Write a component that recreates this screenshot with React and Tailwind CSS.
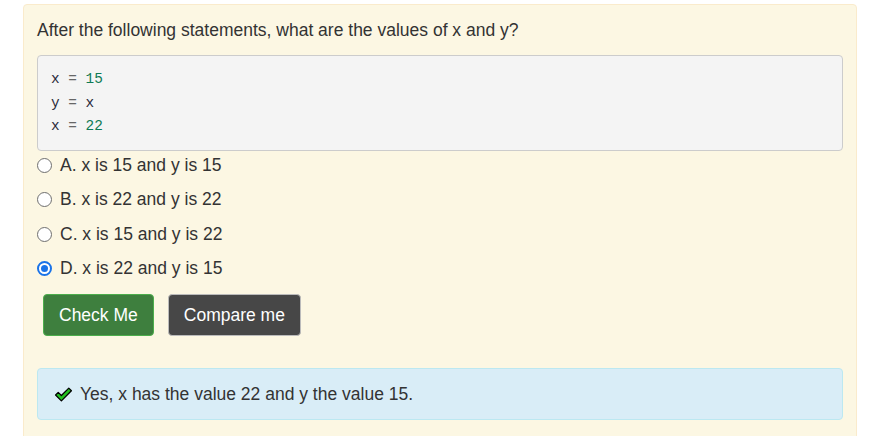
export default function App() {
  const opts = [
    { k: "A", t: "A. x is 15 and y is 15" },
    { k: "B", t: "B. x is 22 and y is 22" },
    { k: "C", t: "C. x is 15 and y is 22" },
    { k: "D", t: "D. x is 22 and y is 15", checked: true },
  ];
  return (
    <div className="w-[874px] h-[436px] overflow-hidden bg-white font-['Liberation_Sans',Arial,sans-serif] text-[#333]">
      <div className="ml-[23px] mt-[4px] w-[834px] h-[460px] rounded-[4px] border border-[#faebcc] bg-[#fcf7e3] px-[13px] pt-[13px]">
        <p className="text-[17.5px] leading-[24px]">
          After the following statements, what are the values of x and y?
        </p>
        <div className="mt-[13px] rounded-[4px] border border-[#ccc] bg-[#f4f4f4] pl-[13px] pt-[12px] pb-[11.5px] font-['Liberation_Mono',monospace] text-[14.4px] leading-[23.5px]">
          <div>
            <span className="text-[#2a2a3a]">x</span> <span className="text-[#666]">=</span> <span className="text-[#0f7a55]">15</span>
          </div>
          <div>
            <span className="text-[#2a2a3a]">y</span> <span className="text-[#666]">=</span> <span className="text-[#2a2a3a]">x</span>
          </div>
          <div>
            <span className="text-[#2a2a3a]">x</span> <span className="text-[#666]">=</span> <span className="text-[#0f7a55]">22</span>
          </div>
        </div>
        <div className="mt-[4px] flex flex-col gap-[14.5px]">
          {opts.map((o) => (
            <label key={o.k} className="flex items-center h-[20px] text-[17.5px]">
              {o.checked ? (
                <span className="shrink-0 mr-[8px] w-[15px] h-[15px] rounded-full border-[2px] border-[#1a73e8] bg-white flex items-center justify-center">
                  <span className="w-[7px] h-[7px] rounded-full bg-[#1a73e8]" />
                </span>
              ) : (
                <span className="shrink-0 mr-[8px] w-[15px] h-[15px] rounded-full border-[1.5px] border-[#6f6f6f] bg-white" />
              )}
              <span>{o.t}</span>
            </label>
          ))}
        </div>
        <div className="mt-[15.5px] flex gap-[14px] pl-[6px]">
          <button className="h-[42px] px-[15px] rounded-[4px] border border-[#4cae4c] bg-[#3e7f3e] text-white text-[17.5px]">
            Check Me
          </button>
          <button className="h-[42px] px-[15px] rounded-[4px] border border-[#bbb] bg-[#474747] text-white text-[17.5px]">
            Compare me
          </button>
        </div>
        <div className="mt-[32px] h-[52px] rounded-[4px] border border-[#bce8f1] bg-[#d9edf7] flex items-center pl-[16px] text-[17.5px]">
          <svg width="19" height="17" viewBox="0 0 18 16" className="mr-[7px]">
            <path
              d="M1.5 8.5 L4 6 L7 9 L14 2 L16.5 4.5 L7 14 Z"
              fill="#22c322"
              stroke="#000"
              strokeWidth="1.2"
              strokeLinejoin="round"
            />
          </svg>
          <span>Yes, x has the value 22 and y the value 15.</span>
        </div>
      </div>
    </div>
  );
}
